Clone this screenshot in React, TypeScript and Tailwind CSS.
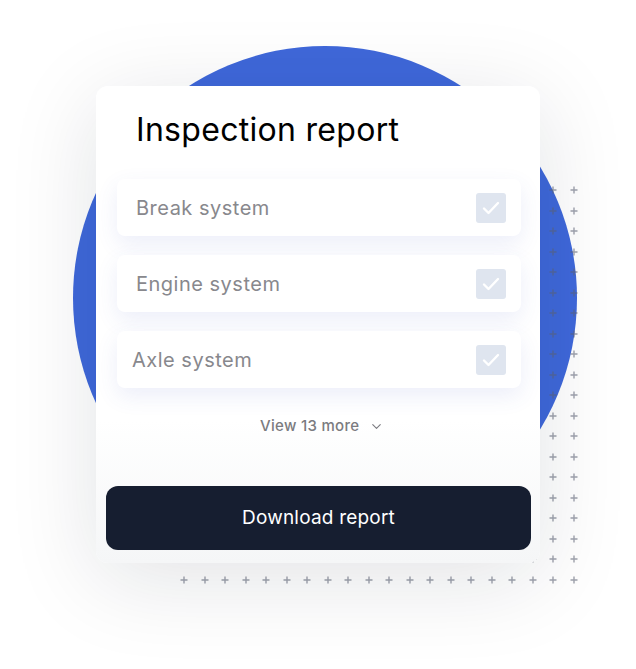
import { ChevronDown } from 'lucide-react'

const items = [
  { label: 'Break system', pad: 'pl-[19px]' },
  { label: 'Engine system', pad: 'pl-[19px]' },
  { label: 'Axle system', pad: 'pl-[15px]' },
]

function PlusGrid() {
  return (
    <div className="absolute left-[174px] top-[180px] grid grid-cols-[repeat(20,20.5px)] grid-rows-[repeat(20,20.5px)]">
      {Array.from({ length: 400 }).map((_, i) => (
        <span key={i} className="flex items-center justify-center">
          <svg width="8" height="8" viewBox="0 0 8 8">
            <path d="M4 0.5v7M0.5 4h7" stroke="rgba(95,100,118,0.6)" strokeWidth="1.4" />
          </svg>
        </span>
      ))}
    </div>
  )
}

export default function App() {
  return (
    <div className="relative w-[636px] h-[669px] overflow-hidden bg-white font-['Inter',sans-serif] pl-[96px] pt-[86px]">
      {/* decoration */}
      <div className="absolute left-[73px] top-[46px] w-[504px] h-[504px] rounded-full bg-[#3f68da]" />
      <PlusGrid />

      <section className="relative w-[444px] h-[477px] rounded-[12px] bg-linear-to-b from-white from-70% to-[#f5f6f7] shadow-[0_16px_90px_rgba(20,24,40,0.12)] flex flex-col">
        <h1 className="pl-[40px] pt-[22px] text-[32px] leading-[44px] text-black tracking-[0.3px]">
          Inspection report
        </h1>

        <div className="mt-[27px] ml-[21px] mr-[19px] flex flex-col gap-[19px]">
          {items.map((item) => (
            <div
              key={item.label}
              className={`h-[57px] rounded-[8px] bg-white flex items-center justify-between pr-[15px] shadow-[0_8px_22px_rgba(70,90,200,0.10)] ${item.pad}`}
            >
              <span className="text-[20px] text-[#88888d] tracking-[0.5px]">{item.label}</span>
              <span className="w-[30px] h-[30px] rounded-[3px] bg-[#dfe5ef] flex items-center justify-center">
                <svg width="18" height="14" viewBox="0 0 18 14" fill="none">
                  <path d="M2 7.5l4.5 4.5L16 2" stroke="white" strokeWidth="2.4" strokeLinecap="round" strokeLinejoin="round" />
                </svg>
              </span>
            </div>
          ))}
        </div>

        <button className="mt-[28px] ml-[164px] flex items-center gap-[10px] h-[20px] text-[15px] font-medium text-[#7b7b80] tracking-[0.3px]">
          View 13 more
          <ChevronDown size={15} strokeWidth={1.8} className="mt-[1px]" />
        </button>

        <button className="mt-[50px] ml-[10px] mr-[9px] h-[64px] rounded-[12px] bg-[#161e30] text-white text-[19px] tracking-[0.2px]">
          Download report
        </button>
      </section>
    </div>
  )
}
